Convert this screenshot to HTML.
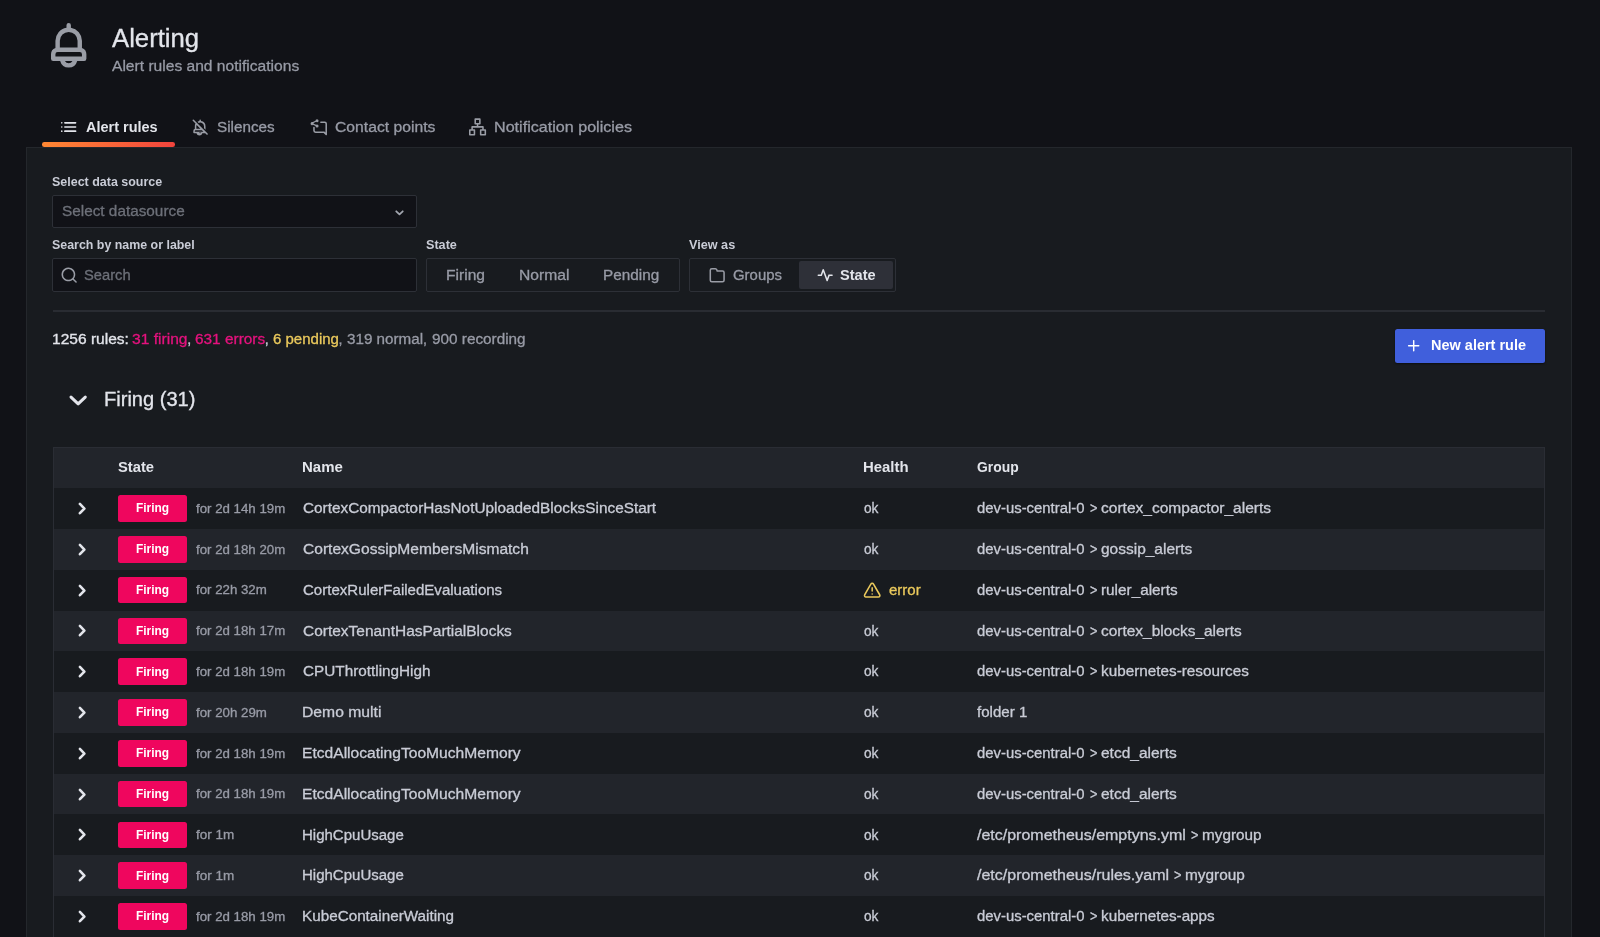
<!DOCTYPE html>
<html lang="en"><head><meta charset="utf-8"><title>Alerting - Alert rules</title>
<style>
html,body{margin:0;padding:0;}
body{width:1600px;height:937px;overflow:hidden;background:#111217;position:relative;font-family:"Liberation Sans", sans-serif;}
#app{position:absolute;left:0;top:0;width:1600px;height:937px;overflow:hidden;will-change:transform;}
header,nav,main,section,a{display:block;margin:0;padding:0;}
.b{position:absolute;}
.i{position:absolute;overflow:visible;}
.t{position:absolute;display:block;margin:0;padding:0;white-space:pre;font-weight:400;-webkit-text-stroke:0.3px;transform-origin:0 0;}
.t.bd{font-weight:700;-webkit-text-stroke:0;}
</style></head><body>
<div id="app">
 <header class="page-header">
  <svg class="i" style="left:50.8px;top:23.2px;width:35.40px;height:44.60px" viewBox="4 2 16 20" preserveAspectRatio="none"><path fill="#9a9da6" d="M18,13.18V10a6,6,0,0,0-5-5.91V3a1,1,0,0,0-2,0V4.09A6,6,0,0,0,6,10v3.18A3,3,0,0,0,4,16v2a1,1,0,0,0,1,1H8.14a4,4,0,0,0,7.720,0H19a1,1,0,0,0,1-1V16A3,3,0,0,0,18,13.18ZM8,10a4,4,0,0,1,8,0v3H8Zm4,10a2,2,0,0,1-1.72-1h3.44A2,2,0,0,1,12,20Zm6-3H6V16a1,1,0,0,1,1-1H17a1,1,0,0,1,1,1Z"/></svg>
  <h1 class="t" style="left:111.90px;top:22px;font-size:25px;line-height:32px;color:#e3e5eb;transform:scaleX(1.0279);">Alerting</h1>
  <div class="t sub" style="left:112.20px;top:55px;font-size:15.3px;line-height:21px;color:#989ba6;transform:scaleX(1.0192);">Alert rules and notifications</div>
 </header>
 <nav class="tabs" role="tablist">
  <a class="tab active" role="tab" aria-selected="true">
   <svg class="i" style="left:60.9px;top:122.1px;width:15.40px;height:10.00px" viewBox="2 6 20 12" preserveAspectRatio="none"><g fill="#e3e5eb"><circle cx="3" cy="7" r="1"/><circle cx="3" cy="12" r="1"/><circle cx="3" cy="17" r="1"/><rect x="6" y="6" width="16" height="2" rx="1"/><rect x="6" y="11" width="16" height="2" rx="1"/><rect x="6" y="16" width="16" height="2" rx="1"/></g></svg>
   <span class="t bd" style="left:85.60px;top:117px;font-size:14.28px;line-height:20px;color:#e3e5eb;transform:scaleX(1.0152);">Alert rules</span>
   <div class="b tab-underline" style="left:42.25px;top:142.3px;width:132.50px;height:4.70px;background:linear-gradient(90deg,#ff8833,#f2443d);border-radius:2.3px;"></div>
  </a>
  <a class="tab" role="tab">
   <svg class="i" style="left:190.9px;top:117.5px;width:18.36px;height:18.36px" viewBox="0 0 24 24" ><path fill="#9a9da6" d="M13,4.07V3a1,1,0,0,0-2,0V4.07a7,7,0,0,0-2.440.840L10,6.400A5,5,0,0,1,17,11v2.350l2,2V11A7,7,0,0,0,13,4.070Zm8.710,16.220-18-18A1,1,0,0,0,2.290,3.710L5.880,7.290A6.930,6.930,0,0,0,5,11v3.180A3,3,0,0,0,3,17v2a1,1,0,0,0,1,1H7.140a4,4,0,0,0,7.720,0h3.730l1.700,1.710a1,1,0,0,0,1.420,0A1,1,0,0,0,21.710,20.290ZM7,11a4.940,4.940,0,0,1,.38-1.910L12.240,14H7Zm5,9a2,2,0,0,1-1.720-1h3.440A2,2,0,0,1,12,20ZM5,18V17a1,1,0,0,1,1-1h8.240l2,2Z"/></svg>
   <span class="t" style="left:216.90px;top:117px;font-size:14.28px;line-height:20px;color:#989ba6;transform:scaleX(1.0690);">Silences</span>
  </a>
  <a class="tab" role="tab">
   <svg class="i" style="left:308.5px;top:117.8px;width:18.36px;height:18.36px" viewBox="0 0 24 24" ><path fill="#9a9da6" d="M20.5,4.5h-5a1,1,0,0,0,0,2h5a1,1,0,0,1,1,1v11.590l-1.290-1.300A1,1,0,0,0,19.500,17.500H8.500a1,1,0,0,1-1-1V12.500a1,1,0,0,0-2,0v4a3,3,0,0,0,3,3h10.590l2.700,2.710a1,1,0,0,0,.710.290.840.840,0,0,0,.380-.080,1,1,0,0,0,.620-.920V7.500A3,3,0,0,0,20.500,4.500Zm-17,5a2,2,0,0,0,1.590-.800l3.420,1.710a2,2,0,0,0,0,.090,2,2,0,1,0,2-2,2,2,0,0,0-1.240.440L6.010,7.370a2,2,0,0,0,0-.750L9.260,5.060A2,2,0,0,0,10.500,5.500a2,2,0,1,0-2-2,2,2,0,0,0,0,.090L5.090,5.300A2,2,0,1,0,3.500,9.500Z"/></svg>
   <span class="t" style="left:334.75px;top:117px;font-size:14.28px;line-height:20px;color:#989ba6;transform:scaleX(1.1009);">Contact points</span>
  </a>
  <a class="tab" role="tab">
   <svg class="i" style="left:469.2px;top:118.2px;width:17.10px;height:17.80px" viewBox="1 1 22 22" ><path fill="#9a9da6" d="M22,15H20V12a1,1,0,0,0-1-1H13V9h2a1,1,0,0,0,1-1V2a1,1,0,0,0-1-1H9A1,1,0,0,0,8,2V8A1,1,0,0,0,9,9h2v2H5a1,1,0,0,0-1,1v3H2a1,1,0,0,0-1,1v6a1,1,0,0,0,1,1H8a1,1,0,0,0,1-1V16a1,1,0,0,0-1-1H6V13H18v2H16a1,1,0,0,0-1,1v6a1,1,0,0,0,1,1h6a1,1,0,0,0,1-1V16A1,1,0,0,0,22,15ZM7,17v4H3V17ZM10,7V3h4V7ZM21,21H17V17h4Z"/></svg>
   <span class="t" style="left:494.12px;top:117px;font-size:14.28px;line-height:20px;color:#989ba6;transform:scaleX(1.1296);">Notification policies</span>
  </a>
 </nav>
 <main class="panel">
  <div class="b panel-bg" style="left:26px;top:147px;width:1546.00px;height:813.00px;background:#181b1f;border:1px solid #24272c;box-sizing:border-box;"></div>
  <section class="filters">
   <div class="field">
    <label class="t bd" style="left:51.90px;top:173px;font-size:12.24px;line-height:18px;color:#c9ccd6;transform:scaleX(1.0192);">Select data source</label>
    <div class="b select" style="left:52.3px;top:194.6px;width:365.00px;height:33.60px;background:#111217;border:1px solid #2d3037;box-sizing:border-box;border-radius:2px;"></div>
    <span class="t" style="left:62.25px;top:201px;font-size:14.28px;line-height:20px;color:#6d7079;transform:scaleX(1.0743);">Select datasource</span>
    <svg class="i" style="left:395.0px;top:209.8px;width:9.00px;height:5.90px" viewBox="0 0 9 6" ><path d="M1.2 1.3 L4.5 4.5 L7.8 1.3" fill="none" stroke="#a2a6af" stroke-width="1.8" stroke-linecap="round" stroke-linejoin="round"/></svg>
   </div>
   <div class="field">
    <label class="t bd" style="left:51.90px;top:236px;font-size:12.24px;line-height:18px;color:#c9ccd6;transform:scaleX(1.0138);">Search by name or label</label>
    <div class="b input" style="left:52.3px;top:258.0px;width:365.00px;height:33.70px;background:#111217;border:1px solid #2d3037;box-sizing:border-box;border-radius:2px;"></div>
    <svg class="i" style="left:60.4px;top:265.9px;width:18.36px;height:18.36px" viewBox="0 0 24 24" ><path fill="#9a9da6" d="M21.710,20.290,18,16.610A9,9,0,1,0,16.610,18l3.680,3.680a1,1,0,0,0,1.420,0A1,1,0,0,0,21.710,20.290ZM11,18a7,7,0,1,1,7-7A7,7,0,0,1,11,18Z"/></svg>
    <span class="t" style="left:83.70px;top:265px;font-size:14.28px;line-height:20px;color:#6d7079;transform:scaleX(1.0324);">Search</span>
   </div>
   <div class="field">
    <label class="t bd" style="left:426.20px;top:236px;font-size:12.24px;line-height:18px;color:#c9ccd6;transform:scaleX(1.0311);">State</label>
    <div class="b radio-group" style="left:426.4px;top:258.0px;width:253.30px;height:33.70px;background:#181b1f;border:1px solid #2d3037;box-sizing:border-box;border-radius:2px;"></div>
    <span class="t" style="left:445.71px;top:265px;font-size:14.28px;line-height:20px;color:#989ba6;transform:scaleX(1.0925);">Firing</span>
    <span class="t" style="left:518.50px;top:265px;font-size:14.28px;line-height:20px;color:#989ba6;transform:scaleX(1.0970);">Normal</span>
    <span class="t" style="left:603.13px;top:265px;font-size:14.28px;line-height:20px;color:#989ba6;transform:scaleX(1.0735);">Pending</span>
   </div>
   <div class="field">
    <label class="t bd" style="left:688.60px;top:236px;font-size:12.24px;line-height:18px;color:#c9ccd6;transform:scaleX(1.0343);">View as</label>
    <div class="b radio-group" style="left:688.6px;top:258.0px;width:207.80px;height:33.70px;background:#181b1f;border:1px solid #2d3037;box-sizing:border-box;border-radius:2px;"></div>
    <svg class="i" style="left:708.2px;top:265.8px;width:18.36px;height:18.36px" viewBox="0 0 24 24" ><path fill="#9a9da6" d="M19,5.500H12.720l-.32-1a3,3,0,0,0-2.840-2H5a3,3,0,0,0-3,3v13a3,3,0,0,0,3,3H19a3,3,0,0,0,3-3V8.500A3,3,0,0,0,19,5.500Zm1,13a1,1,0,0,1-1,1H5a1,1,0,0,1-1-1V5.500a1,1,0,0,1,1-1H9.560a1,1,0,0,1,.95.680l.54,1.640A1,1,0,0,0,12,7.500h7a1,1,0,0,1,1,1Z"/></svg>
    <span class="t" style="left:732.70px;top:265px;font-size:14.28px;line-height:20px;color:#989ba6;transform:scaleX(1.0461);">Groups</span>
    <div class="b radio-active" style="left:799.4px;top:260.9px;width:94.10px;height:27.90px;background:#2e3038;border-radius:2px;"></div>
    <svg class="i" style="left:815.9px;top:265.5px;width:18.36px;height:18.36px" viewBox="0 0 24 24" ><path fill="#e3e5eb" d="M21,11H17.060a.780.780,0,0,0-.210,0l-.170,0a1.300,1.300,0,0,0-.150.100,1.670,1.670,0,0,0-.160.120,1,1,0,0,0-.090.130,1.320,1.320,0,0,0-.120.200v0l-1.600,4.410L10.390,4.660a1,1,0,0,0-1.880,0L6.200,11H3a1,1,0,0,0,0,2H6.920L7.150,13l.150,0a.860.860,0,0,0,.160-.100,1.670,1.670,0,0,0,.16-.120l.08-.130a1,1,0,0,0,.120-.200v0L9.450,7.920l4.160,11.420a1,1,0,0,0,.940.660h0a1,1,0,0,0,.940-.660L17.790,13H21a1,1,0,0,0,0-2Z"/></svg>
    <span class="t bd" style="left:839.90px;top:265px;font-size:14.28px;line-height:20px;color:#e3e5eb;transform:scaleX(1.0215);">State</span>
   </div>
  </section>
  <section class="summary">
   <div class="b divider" style="left:52.5px;top:309.5px;width:1492.50px;height:2.10px;background:#292c32;"></div>
   <div class="stats">
    <span class="t" style="left:52.21px;top:329px;font-size:14.28px;line-height:20px;color:#e3e5eb;transform:scaleX(1.0901);">1256 rules:</span>
    <span class="t" style="left:131.90px;top:329px;font-size:14.28px;line-height:20px;color:#e5127e;transform:scaleX(1.0941);">31 firing</span>
    <span class="t" style="left:187.30px;top:329px;font-size:14.28px;line-height:20px;color:#c9ccd6;transform:scaleX(1.0000);">,</span>
    <span class="t" style="left:195.00px;top:329px;font-size:14.28px;line-height:20px;color:#e5127e;transform:scaleX(1.0788);">631 errors</span>
    <span class="t" style="left:264.80px;top:329px;font-size:14.28px;line-height:20px;color:#c9ccd6;transform:scaleX(1.0000);">,</span>
    <span class="t" style="left:272.75px;top:329px;font-size:14.28px;line-height:20px;color:#eac95c;transform:scaleX(1.0520);">6 pending</span>
    <span class="t" style="left:338.50px;top:329px;font-size:14.28px;line-height:20px;color:#989ba6;transform:scaleX(1.0000);">,</span>
    <span class="t" style="left:347.20px;top:329px;font-size:14.28px;line-height:20px;color:#989ba6;transform:scaleX(1.0660);">319 normal</span>
    <span class="t" style="left:422.90px;top:329px;font-size:14.28px;line-height:20px;color:#989ba6;transform:scaleX(1.0000);">,</span>
    <span class="t" style="left:431.60px;top:329px;font-size:14.28px;line-height:20px;color:#989ba6;transform:scaleX(1.0733);">900 recording</span>
   </div>
   <div class="actions">
    <div class="b btn" style="left:1395px;top:328.5px;width:150.20px;height:34.20px;background:#405fdc;border-radius:2.5px;box-shadow:0 1px 2px rgba(0,0,0,.5);"></div>
    <svg class="i" style="left:1404.9px;top:336.8px;width:17.40px;height:17.40px" viewBox="0 0 24 24" ><path fill="#ffffff" d="M19,11H13V5a1,1,0,0,0-2,0v6H5a1,1,0,0,0,0,2h6v6a1,1,0,0,0,2,0V13h6a1,1,0,0,0,0-2Z"/></svg>
    <span class="t bd" style="left:1431.40px;top:335px;font-size:14.28px;line-height:20px;color:#ffffff;transform:scaleX(1.0158);">New alert rule</span>
   </div>
  </section>
  <div class="group-heading">
   <svg class="i" style="left:69.0px;top:395.2px;width:18.30px;height:11.10px" viewBox="0 0 18.3 11.1" ><path d="M2 2.1 L9.15 8.9 L16.3 2.1" fill="none" stroke="#e3e5eb" stroke-width="3" stroke-linecap="round" stroke-linejoin="round"/></svg>
   <h5 class="t" style="left:103.60px;top:386px;font-size:20px;line-height:26px;color:#e3e5eb;transform:scaleX(1.0037);">Firing (31)</h5>
  </div>
  <div class="rules-table" role="table">
   <div class="b table-bg" style="left:52.5px;top:446.5px;width:1492.50px;height:513.50px;background:#181b1f;border:1px solid #2a2d34;border-bottom:none;box-sizing:border-box;"></div>
   <div class="tr thead" role="row">
    <div class="b" style="left:53.5px;top:447.5px;width:1490.50px;height:40.60px;background:#22252b;"></div>
    <span class="t bd" style="left:117.90px;top:457px;font-size:14.28px;line-height:20px;color:#e3e5eb;transform:scaleX(1.0329);">State</span>
    <span class="t bd" style="left:302.20px;top:457px;font-size:14.28px;line-height:20px;color:#e3e5eb;transform:scaleX(1.0509);">Name</span>
    <span class="t bd" style="left:862.60px;top:457px;font-size:14.28px;line-height:20px;color:#e3e5eb;transform:scaleX(1.0447);">Health</span>
    <span class="t bd" style="left:977.30px;top:457px;font-size:14.28px;line-height:20px;color:#e3e5eb;transform:scaleX(0.9727);">Group</span>
   </div>
   <div class="tr" role="row">
    <svg class="i" style="left:77.9px;top:501.9px;width:8.50px;height:13.10px" viewBox="0 0 8.5 13.1" ><path d="M1.9 1.9 L6.4 6.55 L1.9 11.2" fill="none" stroke="#e3e5eb" stroke-width="2.6" stroke-linecap="round" stroke-linejoin="round"/></svg>
    <div class="b badge" style="left:117.5px;top:495.25px;width:69.75px;height:26.65px;background:#ef065e;border-radius:2.5px;"></div>
    <span class="t bd" style="left:136.10px;top:499px;font-size:12.24px;line-height:18px;color:#ffffff;transform:scaleX(0.9745);">Firing</span>
    <span class="t" style="left:196.00px;top:500px;font-size:12.24px;line-height:18px;color:#989ba6;transform:scaleX(1.0840);">for 2d 14h 19m</span>
    <span class="t" style="left:303.00px;top:498px;font-size:14.28px;line-height:20px;color:#c9ccd6;transform:scaleX(1.0756);">CortexCompactorHasNotUploadedBlocksSinceStart</span>
    <span class="t" style="left:863.70px;top:498px;font-size:14.28px;line-height:20px;color:#c9ccd6;transform:scaleX(0.9602);">ok</span>
    <span class="t" style="left:977.30px;top:498px;font-size:14.28px;line-height:20px;color:#c9ccd6;transform:scaleX(1.0423);">dev-us-central-0</span>
    <span class="t" style="left:1089.80px;top:498px;font-size:14.28px;line-height:20px;color:#c9ccd6;transform:scaleX(0.8875);">&gt;</span>
    <span class="t" style="left:1101.10px;top:498px;font-size:14.28px;line-height:20px;color:#c9ccd6;transform:scaleX(1.0887);">cortex_compactor_alerts</span>
   </div>
   <div class="tr" role="row">
    <div class="b row-bg" style="left:53.5px;top:528.9px;width:1490.50px;height:40.80px;background:#22252b;"></div>
    <svg class="i" style="left:77.9px;top:542.7px;width:8.50px;height:13.10px" viewBox="0 0 8.5 13.1" ><path d="M1.9 1.9 L6.4 6.55 L1.9 11.2" fill="none" stroke="#e3e5eb" stroke-width="2.6" stroke-linecap="round" stroke-linejoin="round"/></svg>
    <div class="b badge" style="left:117.5px;top:536.05px;width:69.75px;height:26.65px;background:#ef065e;border-radius:2.5px;"></div>
    <span class="t bd" style="left:136.10px;top:540px;font-size:12.24px;line-height:18px;color:#ffffff;transform:scaleX(0.9745);">Firing</span>
    <span class="t" style="left:196.00px;top:541px;font-size:12.24px;line-height:18px;color:#989ba6;transform:scaleX(1.0840);">for 2d 18h 20m</span>
    <span class="t" style="left:303.00px;top:539px;font-size:14.28px;line-height:20px;color:#c9ccd6;transform:scaleX(1.0914);">CortexGossipMembersMismatch</span>
    <span class="t" style="left:863.70px;top:539px;font-size:14.28px;line-height:20px;color:#c9ccd6;transform:scaleX(0.9602);">ok</span>
    <span class="t" style="left:977.30px;top:539px;font-size:14.28px;line-height:20px;color:#c9ccd6;transform:scaleX(1.0423);">dev-us-central-0</span>
    <span class="t" style="left:1089.80px;top:539px;font-size:14.28px;line-height:20px;color:#c9ccd6;transform:scaleX(0.8875);">&gt;</span>
    <span class="t" style="left:1101.10px;top:539px;font-size:14.28px;line-height:20px;color:#c9ccd6;transform:scaleX(1.0855);">gossip_alerts</span>
   </div>
   <div class="tr" role="row">
    <svg class="i" style="left:77.9px;top:583.5px;width:8.50px;height:13.10px" viewBox="0 0 8.5 13.1" ><path d="M1.9 1.9 L6.4 6.55 L1.9 11.2" fill="none" stroke="#e3e5eb" stroke-width="2.6" stroke-linecap="round" stroke-linejoin="round"/></svg>
    <div class="b badge" style="left:117.5px;top:576.85px;width:69.75px;height:26.65px;background:#ef065e;border-radius:2.5px;"></div>
    <span class="t bd" style="left:136.10px;top:581px;font-size:12.24px;line-height:18px;color:#ffffff;transform:scaleX(0.9745);">Firing</span>
    <span class="t" style="left:196.00px;top:581px;font-size:12.24px;line-height:18px;color:#989ba6;transform:scaleX(1.0845);">for 22h 32m</span>
    <span class="t" style="left:303.00px;top:580px;font-size:14.28px;line-height:20px;color:#c9ccd6;transform:scaleX(1.0553);">CortexRulerFailedEvaluations</span>
    <svg class="i" style="left:862.5px;top:580.6px;width:18.36px;height:18.36px" viewBox="0 0 24 24" ><path fill="#eac95c" d="M12,16a1,1,0,1,0,1,1A1,1,0,0,0,12,16Zm10.670,1.470-8.050-14a3,3,0,0,0-5.240,0l-8,14A3,3,0,0,0,3.940,22H20.060a3,3,0,0,0,2.610-4.530Zm-1.730,2a1,1,0,0,1-.88.510H3.940a1,1,0,0,1-.88-.510,1,1,0,0,1,0-1l8-14a1,1,0,0,1,1.780,0l8.050,14A1,1,0,0,1,20.940,19.490ZM12,8a1,1,0,0,0-1,1v4a1,1,0,0,0,2,0V9A1,1,0,0,0,12,8Z"/></svg>
    <span class="t" style="left:888.90px;top:580px;font-size:14.28px;line-height:20px;color:#eac95c;transform:scaleX(1.0537);">error</span>
    <span class="t" style="left:977.30px;top:580px;font-size:14.28px;line-height:20px;color:#c9ccd6;transform:scaleX(1.0423);">dev-us-central-0</span>
    <span class="t" style="left:1089.80px;top:580px;font-size:14.28px;line-height:20px;color:#c9ccd6;transform:scaleX(0.8875);">&gt;</span>
    <span class="t" style="left:1101.10px;top:580px;font-size:14.28px;line-height:20px;color:#c9ccd6;transform:scaleX(1.0741);">ruler_alerts</span>
   </div>
   <div class="tr" role="row">
    <div class="b row-bg" style="left:53.5px;top:610.5px;width:1490.50px;height:40.80px;background:#22252b;"></div>
    <svg class="i" style="left:77.9px;top:624.3px;width:8.50px;height:13.10px" viewBox="0 0 8.5 13.1" ><path d="M1.9 1.9 L6.4 6.55 L1.9 11.2" fill="none" stroke="#e3e5eb" stroke-width="2.6" stroke-linecap="round" stroke-linejoin="round"/></svg>
    <div class="b badge" style="left:117.5px;top:617.65px;width:69.75px;height:26.65px;background:#ef065e;border-radius:2.5px;"></div>
    <span class="t bd" style="left:136.10px;top:622px;font-size:12.24px;line-height:18px;color:#ffffff;transform:scaleX(0.9745);">Firing</span>
    <span class="t" style="left:196.00px;top:622px;font-size:12.24px;line-height:18px;color:#989ba6;transform:scaleX(1.0840);">for 2d 18h 17m</span>
    <span class="t" style="left:303.00px;top:621px;font-size:14.28px;line-height:20px;color:#c9ccd6;transform:scaleX(1.0840);">CortexTenantHasPartialBlocks</span>
    <span class="t" style="left:863.70px;top:621px;font-size:14.28px;line-height:20px;color:#c9ccd6;transform:scaleX(0.9602);">ok</span>
    <span class="t" style="left:977.30px;top:621px;font-size:14.28px;line-height:20px;color:#c9ccd6;transform:scaleX(1.0423);">dev-us-central-0</span>
    <span class="t" style="left:1089.80px;top:621px;font-size:14.28px;line-height:20px;color:#c9ccd6;transform:scaleX(0.8875);">&gt;</span>
    <span class="t" style="left:1101.10px;top:621px;font-size:14.28px;line-height:20px;color:#c9ccd6;transform:scaleX(1.0824);">cortex_blocks_alerts</span>
   </div>
   <div class="tr" role="row">
    <svg class="i" style="left:77.9px;top:665.1px;width:8.50px;height:13.10px" viewBox="0 0 8.5 13.1" ><path d="M1.9 1.9 L6.4 6.55 L1.9 11.2" fill="none" stroke="#e3e5eb" stroke-width="2.6" stroke-linecap="round" stroke-linejoin="round"/></svg>
    <div class="b badge" style="left:117.5px;top:658.45px;width:69.75px;height:26.65px;background:#ef065e;border-radius:2.5px;"></div>
    <span class="t bd" style="left:136.10px;top:663px;font-size:12.24px;line-height:18px;color:#ffffff;transform:scaleX(0.9745);">Firing</span>
    <span class="t" style="left:196.00px;top:663px;font-size:12.24px;line-height:18px;color:#989ba6;transform:scaleX(1.0840);">for 2d 18h 19m</span>
    <span class="t" style="left:303.00px;top:661px;font-size:14.28px;line-height:20px;color:#c9ccd6;transform:scaleX(1.0721);">CPUThrottlingHigh</span>
    <span class="t" style="left:863.70px;top:661px;font-size:14.28px;line-height:20px;color:#c9ccd6;transform:scaleX(0.9602);">ok</span>
    <span class="t" style="left:977.30px;top:661px;font-size:14.28px;line-height:20px;color:#c9ccd6;transform:scaleX(1.0423);">dev-us-central-0</span>
    <span class="t" style="left:1089.80px;top:661px;font-size:14.28px;line-height:20px;color:#c9ccd6;transform:scaleX(0.8875);">&gt;</span>
    <span class="t" style="left:1101.10px;top:661px;font-size:14.28px;line-height:20px;color:#c9ccd6;transform:scaleX(1.0716);">kubernetes-resources</span>
   </div>
   <div class="tr" role="row">
    <div class="b row-bg" style="left:53.5px;top:692.1px;width:1490.50px;height:40.80px;background:#22252b;"></div>
    <svg class="i" style="left:77.9px;top:705.9px;width:8.50px;height:13.10px" viewBox="0 0 8.5 13.1" ><path d="M1.9 1.9 L6.4 6.55 L1.9 11.2" fill="none" stroke="#e3e5eb" stroke-width="2.6" stroke-linecap="round" stroke-linejoin="round"/></svg>
    <div class="b badge" style="left:117.5px;top:699.25px;width:69.75px;height:26.65px;background:#ef065e;border-radius:2.5px;"></div>
    <span class="t bd" style="left:136.10px;top:703px;font-size:12.24px;line-height:18px;color:#ffffff;transform:scaleX(0.9745);">Firing</span>
    <span class="t" style="left:196.00px;top:704px;font-size:12.24px;line-height:18px;color:#989ba6;transform:scaleX(1.0861);">for 20h 29m</span>
    <span class="t" style="left:301.90px;top:702px;font-size:14.28px;line-height:20px;color:#c9ccd6;transform:scaleX(1.1005);">Demo multi</span>
    <span class="t" style="left:863.70px;top:702px;font-size:14.28px;line-height:20px;color:#c9ccd6;transform:scaleX(0.9602);">ok</span>
    <span class="t" style="left:977.30px;top:702px;font-size:14.28px;line-height:20px;color:#c9ccd6;transform:scaleX(1.0577);">folder 1</span>
   </div>
   <div class="tr" role="row">
    <svg class="i" style="left:77.9px;top:746.7px;width:8.50px;height:13.10px" viewBox="0 0 8.5 13.1" ><path d="M1.9 1.9 L6.4 6.55 L1.9 11.2" fill="none" stroke="#e3e5eb" stroke-width="2.6" stroke-linecap="round" stroke-linejoin="round"/></svg>
    <div class="b badge" style="left:117.5px;top:740.05px;width:69.75px;height:26.65px;background:#ef065e;border-radius:2.5px;"></div>
    <span class="t bd" style="left:136.10px;top:744px;font-size:12.24px;line-height:18px;color:#ffffff;transform:scaleX(0.9745);">Firing</span>
    <span class="t" style="left:196.00px;top:745px;font-size:12.24px;line-height:18px;color:#989ba6;transform:scaleX(1.0840);">for 2d 18h 19m</span>
    <span class="t" style="left:301.91px;top:743px;font-size:14.28px;line-height:20px;color:#c9ccd6;transform:scaleX(1.0943);">EtcdAllocatingTooMuchMemory</span>
    <span class="t" style="left:863.70px;top:743px;font-size:14.28px;line-height:20px;color:#c9ccd6;transform:scaleX(0.9602);">ok</span>
    <span class="t" style="left:977.30px;top:743px;font-size:14.28px;line-height:20px;color:#c9ccd6;transform:scaleX(1.0423);">dev-us-central-0</span>
    <span class="t" style="left:1089.80px;top:743px;font-size:14.28px;line-height:20px;color:#c9ccd6;transform:scaleX(0.8875);">&gt;</span>
    <span class="t" style="left:1101.10px;top:743px;font-size:14.28px;line-height:20px;color:#c9ccd6;transform:scaleX(1.0869);">etcd_alerts</span>
   </div>
   <div class="tr" role="row">
    <div class="b row-bg" style="left:53.5px;top:773.7px;width:1490.50px;height:40.80px;background:#22252b;"></div>
    <svg class="i" style="left:77.9px;top:787.5px;width:8.50px;height:13.10px" viewBox="0 0 8.5 13.1" ><path d="M1.9 1.9 L6.4 6.55 L1.9 11.2" fill="none" stroke="#e3e5eb" stroke-width="2.6" stroke-linecap="round" stroke-linejoin="round"/></svg>
    <div class="b badge" style="left:117.5px;top:780.85px;width:69.75px;height:26.65px;background:#ef065e;border-radius:2.5px;"></div>
    <span class="t bd" style="left:136.10px;top:785px;font-size:12.24px;line-height:18px;color:#ffffff;transform:scaleX(0.9745);">Firing</span>
    <span class="t" style="left:196.00px;top:785px;font-size:12.24px;line-height:18px;color:#989ba6;transform:scaleX(1.0840);">for 2d 18h 19m</span>
    <span class="t" style="left:301.91px;top:784px;font-size:14.28px;line-height:20px;color:#c9ccd6;transform:scaleX(1.0943);">EtcdAllocatingTooMuchMemory</span>
    <span class="t" style="left:863.70px;top:784px;font-size:14.28px;line-height:20px;color:#c9ccd6;transform:scaleX(0.9602);">ok</span>
    <span class="t" style="left:977.30px;top:784px;font-size:14.28px;line-height:20px;color:#c9ccd6;transform:scaleX(1.0423);">dev-us-central-0</span>
    <span class="t" style="left:1089.80px;top:784px;font-size:14.28px;line-height:20px;color:#c9ccd6;transform:scaleX(0.8875);">&gt;</span>
    <span class="t" style="left:1101.10px;top:784px;font-size:14.28px;line-height:20px;color:#c9ccd6;transform:scaleX(1.0869);">etcd_alerts</span>
   </div>
   <div class="tr" role="row">
    <svg class="i" style="left:77.9px;top:828.3px;width:8.50px;height:13.10px" viewBox="0 0 8.5 13.1" ><path d="M1.9 1.9 L6.4 6.55 L1.9 11.2" fill="none" stroke="#e3e5eb" stroke-width="2.6" stroke-linecap="round" stroke-linejoin="round"/></svg>
    <div class="b badge" style="left:117.5px;top:821.65px;width:69.75px;height:26.65px;background:#ef065e;border-radius:2.5px;"></div>
    <span class="t bd" style="left:136.10px;top:826px;font-size:12.24px;line-height:18px;color:#ffffff;transform:scaleX(0.9745);">Firing</span>
    <span class="t" style="left:196.00px;top:826px;font-size:12.24px;line-height:18px;color:#989ba6;transform:scaleX(1.1021);">for 1m</span>
    <span class="t" style="left:301.95px;top:825px;font-size:14.28px;line-height:20px;color:#c9ccd6;transform:scaleX(1.0521);">HighCpuUsage</span>
    <span class="t" style="left:863.70px;top:825px;font-size:14.28px;line-height:20px;color:#c9ccd6;transform:scaleX(0.9602);">ok</span>
    <span class="t" style="left:977.30px;top:825px;font-size:14.28px;line-height:20px;color:#c9ccd6;transform:scaleX(1.1212);">/etc/prometheus/emptyns.yml</span>
    <span class="t" style="left:1191.00px;top:825px;font-size:14.28px;line-height:20px;color:#c9ccd6;transform:scaleX(0.8875);">&gt;</span>
    <span class="t" style="left:1202.40px;top:825px;font-size:14.28px;line-height:20px;color:#c9ccd6;transform:scaleX(1.0726);">mygroup</span>
   </div>
   <div class="tr" role="row">
    <div class="b row-bg" style="left:53.5px;top:855.3px;width:1490.50px;height:40.80px;background:#22252b;"></div>
    <svg class="i" style="left:77.9px;top:869.1px;width:8.50px;height:13.10px" viewBox="0 0 8.5 13.1" ><path d="M1.9 1.9 L6.4 6.55 L1.9 11.2" fill="none" stroke="#e3e5eb" stroke-width="2.6" stroke-linecap="round" stroke-linejoin="round"/></svg>
    <div class="b badge" style="left:117.5px;top:862.45px;width:69.75px;height:26.65px;background:#ef065e;border-radius:2.5px;"></div>
    <span class="t bd" style="left:136.10px;top:867px;font-size:12.24px;line-height:18px;color:#ffffff;transform:scaleX(0.9745);">Firing</span>
    <span class="t" style="left:196.00px;top:867px;font-size:12.24px;line-height:18px;color:#989ba6;transform:scaleX(1.1021);">for 1m</span>
    <span class="t" style="left:301.95px;top:865px;font-size:14.28px;line-height:20px;color:#c9ccd6;transform:scaleX(1.0521);">HighCpuUsage</span>
    <span class="t" style="left:863.70px;top:865px;font-size:14.28px;line-height:20px;color:#c9ccd6;transform:scaleX(0.9602);">ok</span>
    <span class="t" style="left:977.30px;top:865px;font-size:14.28px;line-height:20px;color:#c9ccd6;transform:scaleX(1.1216);">/etc/prometheus/rules.yaml</span>
    <span class="t" style="left:1174.20px;top:865px;font-size:14.28px;line-height:20px;color:#c9ccd6;transform:scaleX(0.8875);">&gt;</span>
    <span class="t" style="left:1185.20px;top:865px;font-size:14.28px;line-height:20px;color:#c9ccd6;transform:scaleX(1.0780);">mygroup</span>
   </div>
   <div class="tr" role="row">
    <svg class="i" style="left:77.9px;top:909.9px;width:8.50px;height:13.10px" viewBox="0 0 8.5 13.1" ><path d="M1.9 1.9 L6.4 6.55 L1.9 11.2" fill="none" stroke="#e3e5eb" stroke-width="2.6" stroke-linecap="round" stroke-linejoin="round"/></svg>
    <div class="b badge" style="left:117.5px;top:903.25px;width:69.75px;height:26.65px;background:#ef065e;border-radius:2.5px;"></div>
    <span class="t bd" style="left:136.10px;top:907px;font-size:12.24px;line-height:18px;color:#ffffff;transform:scaleX(0.9745);">Firing</span>
    <span class="t" style="left:196.00px;top:908px;font-size:12.24px;line-height:18px;color:#989ba6;transform:scaleX(1.0840);">for 2d 18h 19m</span>
    <span class="t" style="left:301.93px;top:906px;font-size:14.28px;line-height:20px;color:#c9ccd6;transform:scaleX(1.0695);">KubeContainerWaiting</span>
    <span class="t" style="left:863.70px;top:906px;font-size:14.28px;line-height:20px;color:#c9ccd6;transform:scaleX(0.9602);">ok</span>
    <span class="t" style="left:977.30px;top:906px;font-size:14.28px;line-height:20px;color:#c9ccd6;transform:scaleX(1.0423);">dev-us-central-0</span>
    <span class="t" style="left:1089.80px;top:906px;font-size:14.28px;line-height:20px;color:#c9ccd6;transform:scaleX(0.8875);">&gt;</span>
    <span class="t" style="left:1101.10px;top:906px;font-size:14.28px;line-height:20px;color:#c9ccd6;transform:scaleX(1.0703);">kubernetes-apps</span>
   </div>
   <div class="b row-bg" style="left:53.5px;top:936.9px;width:1490.50px;height:40.80px;background:#22252b;"></div>
  </div>
 </main>
</div>
</body></html>
